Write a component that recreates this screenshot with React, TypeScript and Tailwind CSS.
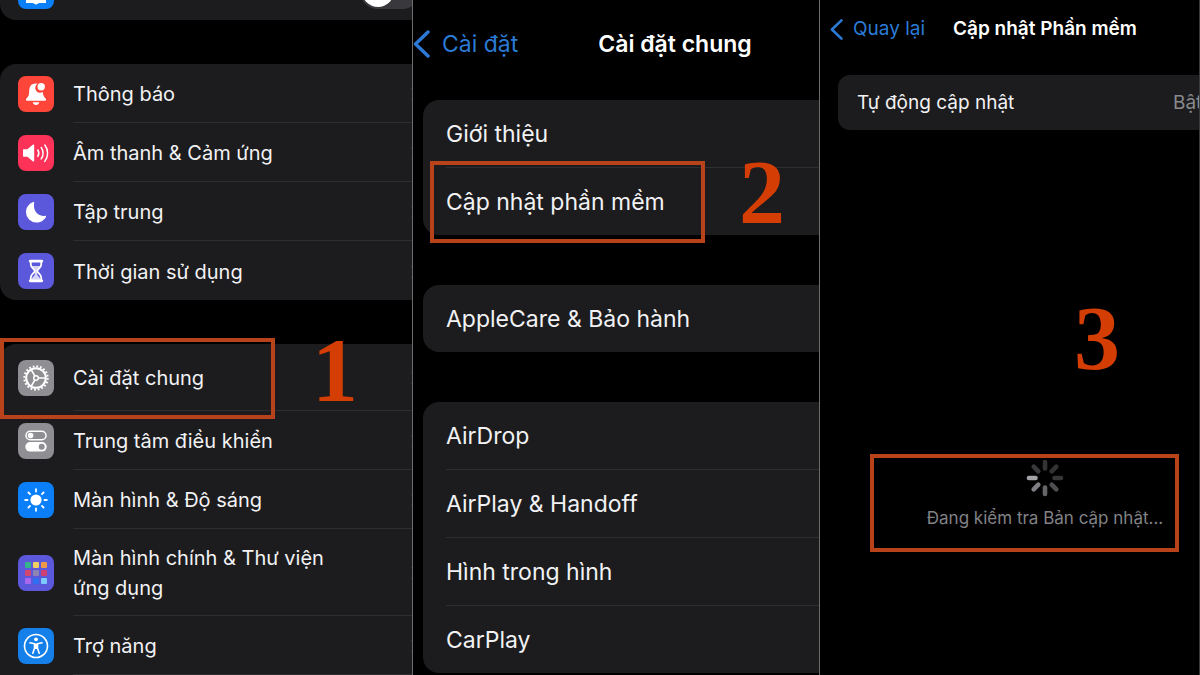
import type { ReactNode } from "react";

interface SettingsItem {
  label: string;
  tint: string;
  icon: ReactNode;
}

const alertItems: SettingsItem[] = [
  { label: "Thông báo", tint: "bg-[#fd4539]", icon: <BellIcon /> },
  { label: "Âm thanh & Cảm ứng", tint: "bg-[#fc3259]", icon: <SpeakerIcon /> },
  { label: "Tập trung", tint: "bg-[#5c58dc]", icon: <MoonIcon /> },
  { label: "Thời gian sử dụng", tint: "bg-[#5c58dc]", icon: <HourglassIcon /> }
];

const generalItem: SettingsItem = { label: "Cài đặt chung", tint: "bg-[#8e8e93]", icon: <GearIcon /> };

const deviceItems: SettingsItem[] = [
  { label: "Trung tâm điều khiển", tint: "bg-[#8e8e93]", icon: <TogglesIcon /> },
  { label: "Màn hình & Độ sáng", tint: "bg-[#0a7ff8]", icon: <SunIcon /> },
  { label: "Màn hình chính & Thư viện ứng dụng", tint: "bg-[#5c58dc]", icon: <AppGridIcon /> },
  { label: "Trợ năng", tint: "bg-[#1580ea]", icon: <AccessibilityIcon /> }
];

const generalGroups = [
  ["Giới thiệu", "Cập nhật phần mềm"],
  ["AppleCare & Bảo hành"],
  ["AirDrop", "AirPlay & Handoff", "Hình trong hình", "CarPlay"]
];

export default function App() {
  return (
    <main className="grid h-screen grid-cols-[413fr_407fr_380fr] overflow-hidden bg-black font-['Inter','Noto_Sans',sans-serif] text-[#f2f2f4]">
      <SettingsPanel />
      <GeneralPanel />
      <UpdatePanel />
    </main>
  );
}

function SettingsPanel() {
  return (
    <section className="relative overflow-hidden border-r border-[#6b6b6b]">
      <div className="-mt-[39px] flex h-[59px] items-center justify-between rounded-bl-2xl bg-[#1c1c1e] pl-[18px]">
        <IconTile tint="bg-[#0a7ff8]">
          <VpnIcon />
        </IconTile>
        <input
          type="checkbox"
          role="switch"
          aria-label="VPN"
          className="-mr-2 h-9 w-[60px] shrink-0 appearance-none rounded-full bg-[#39393d] p-0.5 before:block before:size-8 before:rounded-full before:bg-white"
        />
      </div>
      <div className="mt-11 overflow-hidden rounded-l-2xl bg-[#1c1c1e]">
        {alertItems.map((item, index) => (
          <SettingsRow key={item.label} item={item} height="h-[59px]" last={index === alertItems.length - 1} />
        ))}
      </div>
      <div className="mt-11 rounded-tl-2xl bg-[#1c1c1e]">
        <div className="relative">
          <SettingsRow item={generalItem} height="h-[67px]" />
          <Highlight className="-top-1.5 left-0 h-[81px] w-[275px]" />
          <StepNumber className="-top-6 left-[312px]">1</StepNumber>
        </div>
        {deviceItems.map((item) => (
          <SettingsRow key={item.label} item={item} height={item.label.length > 24 ? "h-[87px]" : "h-[59px]"} />
        ))}
      </div>
    </section>
  );
}

function SettingsRow({ item, height, last }: { item: SettingsItem; height: string; last?: boolean }) {
  return (
    <button className={`flex w-full items-center gap-[19px] overflow-hidden pl-[18px] text-left ${height}`}>
      <IconTile tint={item.tint}>{item.icon}</IconTile>
      <span className={`flex h-full min-w-0 flex-1 items-center justify-between pt-0.5 ${last ? "" : "border-b border-[#2e2e31]"}`}>
        <span className="w-[270px] text-xl leading-[30px]">{item.label}</span>
        <svg viewBox="0 0 8 14" className="-mr-[7px] h-3.5 w-2 shrink-0" fill="none" stroke="#5a5a5e" strokeWidth="2">
          <path d="M1 1l6 6-6 6" />
        </svg>
      </span>
    </button>
  );
}

function GeneralPanel() {
  return (
    <section className="relative overflow-hidden border-r border-[#6b6b6b]">
      <header className="flex h-[100px] items-center gap-20 pb-3">
        <button className="flex items-center gap-3 text-[23px] text-[#2b7bd6]">
          <BackIcon className="h-7 w-[17px]" />
          Cài đặt
        </button>
        <h1 className="text-[23px] font-semibold text-white">Cài đặt chung</h1>
      </header>
      <div className="flex flex-col gap-[50px] pl-2.5">
        {generalGroups.map((group) => (
          <div key={group[0]} className="rounded-l-2xl bg-[#1c1c1e] pl-[23px]">
            {group.map((label, index) => (
              <button
                key={label}
                className={`flex w-full items-center pt-0.5 text-left text-[23px] ${index < group.length - 1 ? "h-[68px] border-b border-[#2e2e31]" : "h-[67px]"}`}
              >
                {label}
              </button>
            ))}
          </div>
        ))}
      </div>
      <Highlight className="left-[17px] top-[161px] h-[82px] w-[275px]" />
      <StepNumber className="left-[326px] top-[142px]">2</StepNumber>
    </section>
  );
}

function UpdatePanel() {
  return (
    <section className="relative overflow-hidden border-r border-[#3a3a3a]">
      <header className="flex h-[75px] items-center gap-7 pb-4 pl-2.5">
        <button className="flex shrink-0 items-center gap-2.5 text-[19px] text-[#2b7bd6]">
          <BackIcon className="h-[23px] w-[13px]" />
          Quay lại
        </button>
        <h1 className="whitespace-nowrap text-[19px] font-semibold text-white">Cập nhật Phần mềm</h1>
      </header>
      <button className="ml-[18px] flex h-[55px] w-full items-center rounded-l-xl bg-[#1c1c1e] pl-[19px] pt-0.5 text-left text-[19px]">
        <span className="flex-1">Tự động cập nhật</span>
        <span className="w-11 text-[#8a8a8e]">Bật</span>
      </button>
      <div className="ml-[50px] mr-5 mt-[324px] flex h-[98px] flex-col items-center gap-2 border-4 border-[#b8431b] pl-[41px] text-[17px] text-[#828286]" role="status">
        <Spinner />
        Đang kiểm tra Bản cập nhật...
      </div>
      <StepNumber className="left-[254px] top-[288px]">3</StepNumber>
    </section>
  );
}

function IconTile({ tint, children }: { tint: string; children: ReactNode }) {
  return <span className={`grid size-9 shrink-0 place-items-center rounded-lg text-white ${tint}`}>{children}</span>;
}

function Highlight({ className }: { className: string }) {
  return <div className={`pointer-events-none absolute border-4 border-[#b8431b] ${className}`} />;
}

function StepNumber({ className, children }: { className: string; children: ReactNode }) {
  return (
    <span className={`absolute font-['Liberation_Serif',serif] text-[92px] font-bold leading-[100px] text-[#d43d04] ${className}`}>
      {children}
    </span>
  );
}

function BackIcon({ className }: { className: string }) {
  return (
    <svg viewBox="0 0 17 28" className={className} fill="none" stroke="currentColor" strokeWidth="3.4" strokeLinecap="round" strokeLinejoin="round">
      <path d="M15 2L2.500 14L15 26" />
    </svg>
  );
}

function Spinner() {
  const spokes = ["#333335", "#333335", "#363638", "#4f4f52", "#666669", "#808084", "#a4a4a8", "#38383a"];
  return (
    <svg viewBox="-20 -20 40 40" className="size-10" strokeWidth="4.600" strokeLinecap="round">
      {spokes.map((color, index) => (
        <path key={index} d="M0 -9.500V-16" stroke={color} transform={`rotate(${index * 45})`} />
      ))}
    </svg>
  );
}

function VpnIcon() {
  return (
    <svg viewBox="0 0 36 36" className="size-9" fill="currentColor">
      <path d="M8 10h20v20h-6.500c-1.500 0-2 1.400-3.500 1.400s-2-1.400-3.500-1.400H8z" />
      <path d="M12 14h12v13H12z" fill="#0a7ff8" />
    </svg>
  );
}

function BellIcon() {
  return (
    <svg viewBox="0 0 36 36" className="size-9" fill="currentColor">
      <path d="M17.500 7.500c-4.600 0-6.300 3.600-6.300 8 0 4-1.300 5.500-3 7.300-.8.900-.3 1.900.8 1.900h18c1.100 0 1.600-1 .8-1.900-1.700-1.800-2.800-3.300-3-6.800a4.900 4.900 0 0 1-5.300-8.300c-.6-.1-1.300-.2-2-.2z" />
      <circle cx="23.200" cy="10.800" r="3.700" />
      <path d="M14.800 26.300h6.400c-.3 1.700-1.500 2.700-3.200 2.700s-2.900-1-3.200-2.700z" />
    </svg>
  );
}

function SpeakerIcon() {
  return (
    <svg viewBox="0 0 36 36" className="size-9" fill="none" stroke="currentColor" strokeWidth="1.500" strokeLinecap="round">
      <path d="M6 14.200h3.400l5.300-4.400c.8-.6 1.500-.3 1.500.6v15.200c0 .9-.7 1.200-1.500.6l-5.300-4.400H6c-.7 0-1-.4-1-1v-5.600c0-.6.3-1 1-1z" fill="currentColor" stroke="none" />
      <path d="M19.800 15c1.200 1.800 1.200 4.600 0 6.400" />
      <path d="M23.200 12.500c2.500 3.200 2.500 8.200 0 11.400" />
      <path d="M26.800 10c3.700 4.800 3.700 11.600 0 16.400" />
    </svg>
  );
}

function MoonIcon() {
  return (
    <svg viewBox="0 0 36 36" className="size-9" fill="currentColor">
      <path d="M16.200 8.600c-1.600 8.200 3.700 14.600 11.200 13.200.6-.1.900.3.600.9-2 4-5.500 5.800-9.600 5.800A10.300 10.300 0 0 1 8 18.200c0-4.600 2.900-8.500 7.200-10.100.7-.3 1.100-.1 1 .5z" />
    </svg>
  );
}

function HourglassIcon() {
  return (
    <svg viewBox="0 0 36 36" className="size-9" fill="none" stroke="currentColor" strokeWidth="1.800">
      <path d="M12.200 8.200h11.600M12.200 27.800h11.600" strokeWidth="2.800" strokeLinecap="round" />
      <path d="M12.800 9v2.500c0 3.500 3.900 4.300 3.900 6.500s-3.900 3-3.900 6.500V27M23.200 9v2.500c0 3.500-3.900 4.300-3.900 6.500s3.900 3 3.900 6.500V27" />
      <path d="M14 13h8c-.8 2-2.600 3-2.800 5v4c1 1.500 3.300 2.500 3.300 5h-9c0-2.500 2.300-3.500 3.300-5v-4c-.2-2-2-3-2.800-5z" fill="currentColor" fillOpacity="0.750" stroke="none" />
    </svg>
  );
}

function GearIcon() {
  return (
    <svg viewBox="-18 -18 36 36" className="size-9" fill="none" stroke="currentColor">
      <circle r="11.700" strokeWidth="2" strokeDasharray="1.800 1.876" />
      <circle r="9.800" strokeWidth="2" />
      <circle r="2.300" strokeWidth="1.500" />
      <path d="M2.400 0H9M-1.200 -2.100L-4.700 -8.100M-1.200 2.100L-4.700 8.100" strokeWidth="1.700" />
    </svg>
  );
}

function TogglesIcon() {
  return (
    <svg viewBox="0 0 36 36" className="size-9" fill="none" stroke="currentColor">
      <rect x="8" y="8.200" width="20" height="8.600" rx="4.300" strokeWidth="1.500" />
      <circle cx="12.600" cy="12.500" r="2.800" fill="currentColor" stroke="none" />
      <rect x="7.300" y="19" width="21.400" height="9.600" rx="4.800" fill="currentColor" stroke="none" />
      <circle cx="23.700" cy="23.800" r="3" fill="#8e8e93" stroke="none" />
    </svg>
  );
}

function SunIcon() {
  return (
    <svg viewBox="-18 -18 36 36" className="size-9" stroke="currentColor" strokeWidth="1.800" strokeLinecap="round">
      <circle r="5.600" fill="currentColor" stroke="none" />
      {[0, 45, 90, 135, 180, 225, 270, 315].map((angle) => (
        <path key={angle} d="M0 -8.500V-10.800" transform={`rotate(${angle})`} />
      ))}
    </svg>
  );
}

function AppGridIcon() {
  const colors = ["#35b38c", "#f0cf62", "#ee9a48", "#d5476c", "#8d84b4", "#cf3f70", "#a868ee", "#2f6ff2", "#7cc9fb"];
  return (
    <span className="grid grid-cols-3 gap-0.5">
      {colors.map((color) => (
        <span key={color} className="size-1.5 rounded-[1px]" style={{ backgroundColor: color }} />
      ))}
    </span>
  );
}

function AccessibilityIcon() {
  return (
    <svg viewBox="0 0 36 36" className="size-9" fill="none" stroke="currentColor" strokeLinecap="round" strokeLinejoin="round">
      <circle cx="18" cy="18" r="11.500" strokeWidth="1.600" />
      <circle cx="18" cy="11.300" r="1.900" fill="currentColor" stroke="none" />
      <path d="M12 14.800l4.500 1v4.500l-1.700 5M24 14.800l-4.500 1v4.500l1.700 5" strokeWidth="1.600" />
      <path d="M16.500 15.500h3v5.500h-3z" fill="currentColor" stroke="none" />
    </svg>
  );
}
